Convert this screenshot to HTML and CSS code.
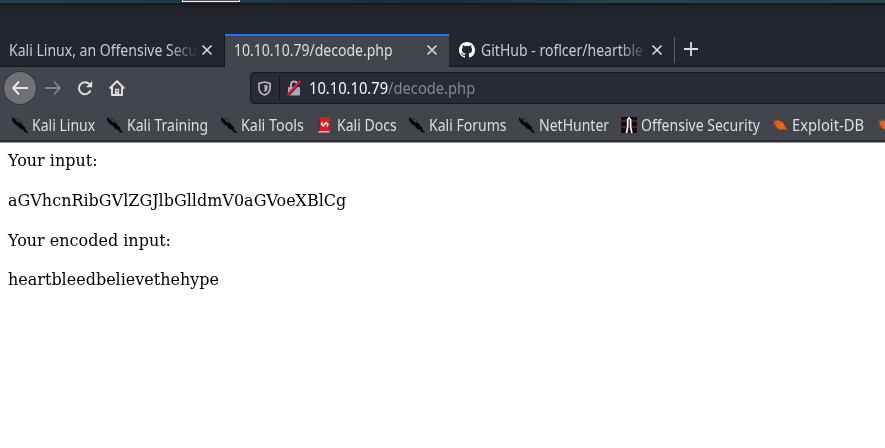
FILE: index.html
```html
<!DOCTYPE html>
<html lang="en">
<head>
<meta charset="utf-8">
<title>10.10.10.79/decode.php</title>
<link rel="stylesheet" href="styles.css">
</head>
<body>
<svg width="0" height="0" class="defs">
  <symbol id="close" viewBox="0 0 12 12"><path d="M1.5 1.5l9 9M10.5 1.5l-9 9" fill="none" stroke="#d5d5d5" stroke-width="1.7"/></symbol>
  <symbol id="kali" viewBox="0 0 16 16"><path d="M0 0l3.500 3 2 2.500L9 6l2 3 2 1.500v2l3 3-3-.5-2-2.500-3-1-2-3-2.500-1L1.500 5 0 3z" fill="#050607" stroke="#050607" stroke-width=".5"/><path d="M3 1.500l3 .5 2.500 3M0 1l3 1" fill="none" stroke="#26282d" stroke-width="1"/></symbol>
  <symbol id="bug" viewBox="0 0 16 16"><path d="M2 4l3-.5 3 .5 3 1.500 1.500 3 2.500 4.500-3.500-1L9 13l-4-2-2-3z" fill="#f26318"/><path d="M1 3.500l5 3M0 8h5M2 11l4-2M7 2l2 4M8 13l2-2" fill="none" stroke="#95502f" stroke-width=".7"/></symbol>
</svg>
<div class="desktop"><span class="task"></span></div>
<div class="tabs">
  <div class="tab first"><span class="label fade"><span class="t">Kali Linux, an Offensive Secu</span></span><svg class="close"><use href="#close"/></svg></div>
  <div class="tab active"><span class="label"><span class="t">10.10.10.79/decode.php</span></span><svg class="close"><use href="#close"/></svg></div>
  <div class="tab third"><svg class="github" viewBox="0 0 16 16"><path fill="#fff" d="M8 0C3.58 0 0 3.58 0 8c0 3.54 2.29 6.53 5.47 7.59.4.07.55-.17.55-.38v-1.49c-2.01.37-2.53-.49-2.69-.94-.09-.23-.48-.94-.82-1.13-.28-.15-.68-.52-.01-.53.63-.01 1.08.58 1.23.82.72 1.21 1.87.87 2.33.66.07-.52.28-.87.51-1.07-1.78-.2-3.64-.89-3.64-3.95 0-.87.31-1.59.82-2.15-.08-.2-.36-1.02.08-2.12 0 0 .67-.21 2.2.82a7.5 7.5 0 0 1 4 0c1.53-1.04 2.2-.82 2.2-.82.44 1.1.16 1.92.08 2.12.51.56.82 1.27.82 2.15 0 3.07-1.87 3.75-3.65 3.95.29.25.54.73.54 1.48v2.2c0 .21.15.46.55.38A8 8 0 0 0 16 8c0-4.42-3.58-8-8-8z"/></svg><span class="label fade"><span class="t">GitHub - roflcer/heartble</span></span><svg class="close"><use href="#close"/></svg></div>
  <svg class="plus" viewBox="0 0 14 14"><path d="M7 0v14M0 7h14" fill="none" stroke="#dedede" stroke-width="1.8"/></svg>
</div>
<div class="toolbar">
  <div class="back"><svg width="16" height="16" viewBox="0 0 16 16"><path d="M7 1.5L1.2 8 7 14.5M1.2 8H16" fill="none" stroke="#e5e5e4" stroke-width="2"/></svg></div>
  <svg class="forward" width="16" height="16" viewBox="0 0 16 16"><path d="M9 1.5L14.8 8 9 14.5M14.8 8H0" fill="none" stroke="#85868a" stroke-width="1.8"/></svg>
  <svg class="reload" width="16" height="16" viewBox="0 0 16 16"><path d="M13.500 10.500A6 6 0 1 1 12.400 4.200L14 6" fill="none" stroke="#dededd" stroke-width="2"/><path d="M15.200 1v6.200H9z" fill="#dededd"/></svg>
  <svg class="home" width="16" height="16" viewBox="0 0 16 16"><path d="M.7 8.500L8 1.300l7.300 7.200M3 7v8h10V7" fill="none" stroke="#dededd" stroke-width="2" stroke-linejoin="round"/><path d="M6.500 14V9.300h3V14M8 11v3" fill="none" stroke="#dededd" stroke-width="1.300"/></svg>
  <div class="url">
    <svg class="shield" width="13" height="15" viewBox="0 0 13 15"><path d="M6.500 1L12 2.300V7c0 3.300-2 5.700-5.500 7C3 12.700 1 10.300 1 7V2.300z" fill="none" stroke="#b7b7bb" stroke-width="1.700"/><path d="M6.500 3.700L9.500 4.400V7c0 2-.9 3.300-3 4.300z" fill="#b7b7bb"/></svg>
    <span class="rule"></span>
    <svg class="lock" width="14" height="16" viewBox="0 0 14 16"><path d="M4 8V4.500a3 3 0 0 1 6 0V8" fill="none" stroke="#aaaaaf" stroke-width="2"/><rect x="1" y="7" width="12" height="8.500" rx="1" fill="#aaaaaf"/><path d="M1.600 15.500L14 2" stroke="#292a34" stroke-width="1.600"/><path d="M.4 14.800L13.300 1" stroke="#f5103f" stroke-width="2.100"/></svg>
    <span class="address t">10.10.10.79<span class="path">/decode.php</span></span>
  </div>
</div>
<div class="bookmarks">
  <div class="bm b1"><svg><use href="#kali"/></svg><span class="t">Kali Linux</span></div>
  <div class="bm b2"><svg><use href="#kali"/></svg><span class="t">Kali Training</span></div>
  <div class="bm b3"><svg><use href="#kali"/></svg><span class="t">Kali Tools</span></div>
  <div class="bm b4"><svg viewBox="0 0 16 16"><path d="M1 1h2v14H1z" fill="#27345f"/><path d="M2.500 0H12.500v14H2.500z" fill="#e01920"/><path d="M1.500 14h11v1.500h-11z" fill="#c9c5c5"/><path d="M5.500 5L4.500 7l2 2L9 5.500l2 2-1 2" fill="none" stroke="#fff" stroke-width="1.300"/></svg><span class="t">Kali Docs</span></div>
  <div class="bm b5"><svg><use href="#kali"/></svg><span class="t">Kali Forums</span></div>
  <div class="bm b6"><svg><use href="#kali"/></svg><span class="t">NetHunter</span></div>
  <div class="bm b7"><svg viewBox="0 0 16 16"><path d="M0 0h16v16H0z" fill="#180b0e"/><path d="M0 4h5M0 10h5M11 4h5M11 10h5" stroke="#61484a"/><path d="M5.500 16l1.200-6V2.500L8 1l1.600 1.500V10l1.200 6" fill="none" stroke="#fff" stroke-width="1.700"/></svg><span class="t">Offensive Security</span></div>
  <div class="bm b8"><svg><use href="#bug"/></svg><span class="t">Exploit-DB</span></div>
  <div class="bm b9"><svg><use href="#bug"/></svg></div>
</div>
<main><p>Your input:</p><p>aGVhcnRibGVlZGJlbGlldmV0aGVoeXBlCg</p><p>Your encoded input:</p><p>heartbleedbelievethehype</p></main>
</body>
</html>
```
FILE: styles.css
```css
* { box-sizing: border-box; }
body { margin: 0; width: 885px; height: 448px; overflow: hidden; background: #fff; font-family: "Noto Sans", sans-serif; font-size: 15.5px; color: #dedede; }
svg { display: block; flex: none; }
.defs { position: absolute; }
.t { display: inline-block; transform: scaleX(.905); transform-origin: left; }
.desktop { height: 5px; padding-left: 182px; background: linear-gradient(90deg, #243f49, #223a50 20%, #1b2b42 50%, #284349 70%, #233c52 88%, #2a444a); border-bottom: 2px solid #15181e; }
.task { display: block; width: 58px; height: 2px; background: #555258; border: 1px solid #eee; border-top: 0; }
.tabs { display: flex; height: 62px; padding-top: 29px; background: linear-gradient(#202027, #23262f 18px); border-bottom: 1px solid #17191f; }
.tab { display: flex; align-items: center; height: 32px; white-space: nowrap; flex: none; }
.label { flex: none; }
.close { width: 12px; height: 12px; }
.first { width: 225px; padding-left: 9px; border-right: 1px solid #17191f; }
.first .label { width: 192px; }
.tab.first, .tab.third { color: #c9cacd; }
.active { width: 224px; height: 33px; padding: 0 0 3px 9px; background: #43454d; border-top: 2px solid #2874f0; }
.active .label { width: 192px; }
.third { width: 226px; height: 26px; margin-top: 3px; padding-left: 10px; border-right: 1px solid #5c5e64; }
.github { width: 16px; height: 16px; margin-right: 6px; }
.third .label { width: 170px; }
.first .fade { mask-image: linear-gradient(90deg, #000 160px, transparent 190px); }
.third .fade { mask-image: linear-gradient(90deg, #000 138px, transparent 167px); }
.plus { width: 14px; height: 14px; margin: 8px 0 0 9px; }
.toolbar { display: flex; align-items: center; height: 42px; padding-left: 4px; background: #43454d; }
.back { display: flex; align-items: center; justify-content: center; width: 32px; height: 32px; border-radius: 50%; background: #707177; box-shadow: 0 0 0 1px #34363c; flex: none; }
.forward { margin-left: 9px; }
.reload, .home { margin-left: 16px; }
.url { display: flex; align-items: center; width: 640px; height: 32px; margin-left: 125px; padding-left: 7px; flex: none; background: #282a35; border: 1px solid #191b22; border-radius: 4px; color: #f9f9fa; }
.rule { width: 1px; height: 24px; margin: 0 7px 0 8px; background: #15161c; }
.address { margin-left: 8px; white-space: nowrap; transform: scaleX(.948); }
.path { color: #85868e; }
.bookmarks { display: flex; align-items: center; height: 33px; padding: 1px 0 0 12px; background: #43454d; border-bottom: 2px solid #292b30; }
.bm { display: flex; align-items: center; flex: none; gap: 4px; white-space: nowrap; }
.bm svg { width: 16px; height: 16px; }
.b1 { width: 95px; } .b2 { width: 114px; } .b3 { width: 96px; } .b4 { width: 92px; }
.b5 { width: 110px; } .b6 { width: 102px; } .b7 { width: 151px; } .b8 { width: 105px; }
.b3 .t { transform: scaleX(.925); }
.b8 .t { transform: scaleX(.953); }
main { padding: 7px 8px; border-top: 1px solid #999; color: #000; font: 17px/20px "DejaVu Serif", serif; }
p { margin: 0 0 19.800px; transform: scaleX(.941); transform-origin: left; }
```
